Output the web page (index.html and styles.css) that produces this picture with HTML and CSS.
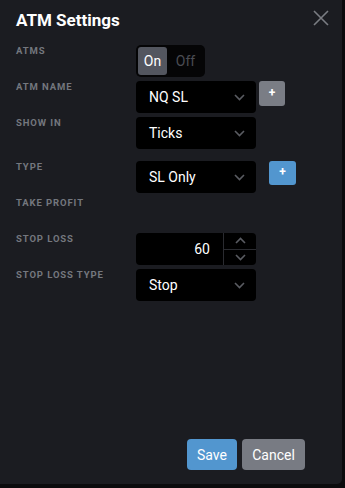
FILE: index.html
```html
<!DOCTYPE html>
<html>
<head>
<meta charset="utf-8">
<link rel="stylesheet" href="styles.css">
</head>
<body>
<div class="panel">
  <div class="header">
    <h1 class="title">ATM Settings</h1>
    <button class="close" aria-label="Close">
      <svg width="16" height="16" viewBox="0 0 16 16"><path d="M1 1L15 15M15 1L1 15" stroke="#7a7c82" stroke-width="1.6" fill="none"/></svg>
    </button>
  </div>

  <div class="row">
    <div class="label">ATMS</div>
    <div class="toggle">
      <span class="seg on">On</span>
      <span class="seg off">Off</span>
    </div>
  </div>

  <div class="row">
    <div class="label">ATM NAME</div>
    <div class="select"><span>NQ SL</span><svg class="chev" width="11" height="7" viewBox="0 0 11 7"><path d="M1 1L5.5 5.5L10 1" stroke="#5a5c62" stroke-width="1.6" fill="none"/></svg></div>
    <button class="plus gray">+</button>
  </div>

  <div class="row gap-after">
    <div class="label">SHOW IN</div>
    <div class="select"><span>Ticks</span><svg class="chev" width="11" height="7" viewBox="0 0 11 7"><path d="M1 1L5.5 5.5L10 1" stroke="#5a5c62" stroke-width="1.6" fill="none"/></svg></div>
  </div>

  <div class="row">
    <div class="label">TYPE</div>
    <div class="select"><span>SL Only</span><svg class="chev" width="11" height="7" viewBox="0 0 11 7"><path d="M1 1L5.5 5.5L10 1" stroke="#5a5c62" stroke-width="1.6" fill="none"/></svg></div>
    <button class="plus blue">+</button>
  </div>

  <div class="row">
    <div class="label">TAKE PROFIT</div>
  </div>

  <div class="row">
    <div class="label">STOP LOSS</div>
    <div class="number">
      <span class="value">60</span>
      <div class="spin">
        <span class="spin-btn"><svg width="11" height="7" viewBox="0 0 11 7"><path d="M1 6L5.5 1.5L10 6" stroke="#5a5c62" stroke-width="1.6" fill="none"/></svg></span>
        <span class="spin-btn"><svg width="11" height="7" viewBox="0 0 11 7"><path d="M1 1L5.5 5.5L10 1" stroke="#5a5c62" stroke-width="1.6" fill="none"/></svg></span>
      </div>
    </div>
  </div>

  <div class="row">
    <div class="label">STOP LOSS TYPE</div>
    <div class="select"><span>Stop</span><svg class="chev" width="11" height="7" viewBox="0 0 11 7"><path d="M1 1L5.5 5.5L10 1" stroke="#5a5c62" stroke-width="1.6" fill="none"/></svg></div>
  </div>

  <div class="footer">
    <button class="btn save">Save</button>
    <button class="btn cancel">Cancel</button>
  </div>
</div>
</body>
</html>
```

FILE: styles.css
```css
* { box-sizing: border-box; }
html, body { margin: 0; padding: 0; }
body {
  background: #0b0b0d;
  width: 345px;
  height: 488px;
  overflow: hidden;
  font-family: Roboto, "Liberation Sans", sans-serif;
}
.panel {
  width: 342px;
  height: 484px;
  background: #1b1c21;
  border-bottom-right-radius: 5px;
  padding: 0 16px;
  display: flex;
  flex-direction: column;
}
.header {
  display: flex;
  justify-content: space-between;
  align-items: flex-start;
  height: 45px;
}
.title {
  margin: 10px 0 0 0;
  font-size: 17px;
  font-weight: 700;
  color: #ffffff;
  line-height: 20px;
}
.close {
  background: none;
  border: 0;
  padding: 0;
  margin: 10px -3px 0 0;
  width: 16px;
  height: 16px;
  display: block;
}
.close svg { display: block; }
.row {
  display: flex;
  align-items: flex-start;
  min-height: 32px;
  margin-bottom: 4px;
}
.row.gap-after { margin-bottom: 12px; }
.label {
  width: 120px;
  flex: none;
  font-size: 9.5px;
  font-weight: 700;
  letter-spacing: 0.9px;
  color: #74777e;
  line-height: 11px;
  padding-top: 0;
}
.toggle {
  width: 69px;
  height: 32px;
  background: #050506;
  border-radius: 5px;
  padding: 2px;
  display: flex;
}
.seg {
  width: 29px;
  display: flex;
  align-items: center;
  justify-content: center;
  font-size: 14px;
  border-radius: 3px;
}
.seg.on { background: #53565f; color: #ffffff; }
.seg.off { color: #4a4c53; margin-left: 4px; }
.select {
  width: 120px;
  height: 32px;
  background: #000000;
  border-radius: 4px;
  display: flex;
  align-items: center;
  justify-content: space-between;
  padding: 0 11px 0 13px;
  color: #ffffff;
  font-size: 14px;
}
.chev { display: block; margin-top: 1px; }
.plus {
  border: 0;
  border-radius: 3px;
  color: #ffffff;
  font-family: inherit;
  font-size: 12px;
  font-weight: 700;
  padding: 0 0 2px 0;
  height: 24px;
  line-height: 22px;
}
.plus.gray { background: #7a7d85; width: 26px; margin-left: 3px; height: 25px; }
.plus.blue { background: #5296cf; width: 27px; margin-left: 13px; }
.number {
  width: 120px;
  height: 32px;
  background: #000000;
  border-radius: 4px;
  display: flex;
  color: #ffffff;
  font-size: 14px;
}
.value {
  flex: 1;
  text-align: right;
  padding-right: 13px;
  line-height: 32px;
}
.spin {
  width: 33px;
  border-left: 1px solid #2a2b30;
  display: flex;
  flex-direction: column;
}
.spin-btn {
  flex: 1;
  display: flex;
  align-items: center;
  justify-content: center;
}
.spin-btn:first-child { border-bottom: 1px solid #2a2b30; }
.spin-btn svg { display: block; }
.footer {
  margin-top: auto;
  display: flex;
  justify-content: flex-end;
  gap: 5px;
  padding-right: 21px;
  padding-bottom: 14px;
}
.btn {
  height: 31px;
  border: 0;
  border-radius: 4px;
  color: #ffffff;
  font-family: inherit;
  font-size: 14px;
  padding: 0;
}
.btn.save { background: #5296cf; width: 50px; }
.btn.cancel { background: #787b83; width: 63px; }
```
